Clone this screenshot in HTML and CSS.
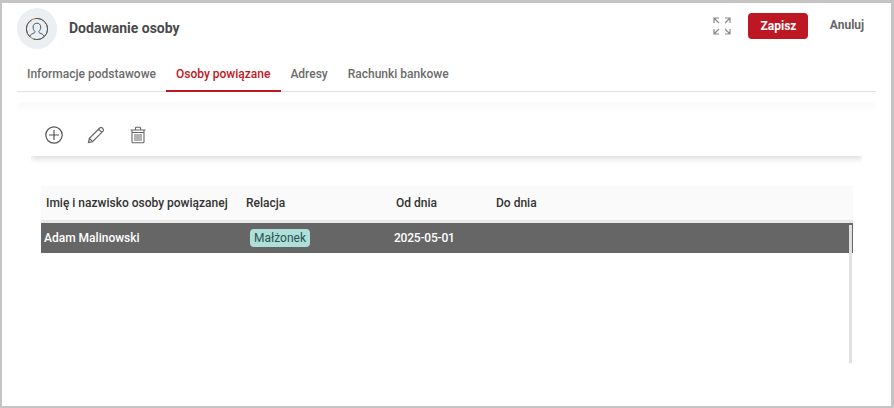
FILE: index.html
```html
<!DOCTYPE html>
<html lang="pl">
<head>
<meta charset="utf-8">
<title>Dodawanie osoby</title>
<link rel="stylesheet" href="styles.css">
</head>
<body>
<div class="window">
  <header class="head">
    <div class="avatar">
      <svg width="24" height="24" viewBox="0 0 24 24" fill="none" stroke-width="1">
        <circle cx="12" cy="12" r="10.6" stroke="#b8752f"/>
        <circle cx="12" cy="12" r="10.6" stroke="#3c5a78" stroke-dasharray="20 4"/>
        <path d="M4.8 19.6c.6-2.4 2.6-3 4.4-3.6.7-.3.9-.9.8-1.5-1.2-1-1.9-2.600-1.900-4.500 0-2.300 1.500-3.800 3.800-3.800s3.800 1.500 3.800 3.800c0 1.900-.7 3.500-1.900 4.500-.1.600.1 1.200.8 1.500 1.800.6 3.800 1.200 4.400 3.600" stroke="#41566c"/>
      </svg>
    </div>
    <h1 class="title">Dodawanie osoby</h1>
    <div class="actions">
      <svg class="expand" width="18" height="18" viewBox="0 0 18 18" fill="none" stroke="#8a8a8a" stroke-width="1.200">
        <path d="M1 6V1h5M1 1l5 5M12 1h5v5M17 1l-5 5M1 12v5h5M1 17l5-5M17 12v5h-5M17 17l-5-5"/>
      </svg>
      <button class="btn-save">Zapisz</button>
      <button class="btn-cancel">Anuluj</button>
    </div>
  </header>
  <nav class="tabs">
    <a class="tab">Informacje podstawowe</a>
    <a class="tab active">Osoby powiązane</a>
    <a class="tab">Adresy</a>
    <a class="tab">Rachunki bankowe</a>
  </nav>
  <section class="panel">
    <div class="toolbar">
      <svg width="18" height="18" viewBox="0 0 18 18" fill="none" stroke="#555" stroke-width="1.200">
        <circle cx="9" cy="9" r="8.200"/>
        <path d="M9 4v10M4 9h10"/>
      </svg>
      <svg width="18" height="18" viewBox="0 0 18 18" fill="none" stroke="#666" stroke-width="1.200">
        <path d="M1.500 16.500l.9-4.100L12.800 2c.7-.7 1.700-.7 2.400 0l.8.8c.7.7.7 1.700 0 2.400L5.600 15.600zM2.400 12.400l3.200 3.200M11.600 3.200l3.200 3.200"/>
      </svg>
      <svg width="18" height="18" viewBox="0 0 18 18" fill="none" stroke="#666" stroke-width="1.100">
        <path d="M1.500 4h15M6.500 3.800V2c0-.5.300-.8.800-.8h3.400c.5 0 .8.300.8.800v1.800M3 4.500v11.300c0 .6.400 1 1 1h10c.6 0 1-.4 1-1V4.500M3 6.500h12"/>
        <path d="M6 8v7M8 8v7M10 8v7M12 8v7" stroke-width="1"/>
      </svg>
    </div>
    <div class="table">
      <div class="row thead">
        <div class="c1">Imię i nazwisko osoby powiązanej</div>
        <div class="c2">Relacja</div>
        <div class="c3">Od dnia</div>
        <div class="c4">Do dnia</div>
      </div>
      <div class="body">
        <div class="row selected">
          <div class="c1">Adam Malinowski</div>
          <div class="c2"><span class="badge">Małżonek</span></div>
          <div class="c3">2025-05-01</div>
          <div class="c4"></div>
        </div>
        <div class="scroll"></div>
      </div>
    </div>
  </section>
</div>
</body>
</html>
```
FILE: styles.css
```css
* { box-sizing: border-box; }
html, body { margin: 0; height: 100%; }
body { font-family: Roboto, "Liberation Sans", sans-serif; background: #fff; overflow: hidden; }
.window {
  height: 408px;
  border: solid #c4c4c4;
  border-width: 3px 3px 2px 2px;
  padding: 5px 5px 0 15px;
  background: #fff;
}
.head { display: flex; align-items: center; height: 41px; }
.avatar {
  width: 40px; height: 41px; border-radius: 50%;
  background: #ebeff2;
  display: flex; align-items: center; justify-content: center;
}
.title { margin: 0 0 2px 12px; font-size: 14px; font-weight: 700; color: #4a4a4a; }
.actions { margin-left: auto; margin-bottom: 5px; display: flex; align-items: center; }
.expand { margin-right: 17px; }
.btn-save {
  width: 60px; height: 26px; border: 0; border-radius: 4px;
  background: #bd1723; color: #fff;
  font: 700 12px Roboto, sans-serif; padding: 0 0 0 1px;
}
.btn-cancel {
  width: 78px; height: 26px; border: 0; background: none; color: #666;
  font: 700 12px Roboto, sans-serif; padding: 0 0 2px 0;
}
.tabs {
  display: flex; height: 35px; margin-top: 8px;
  width: 859px;
  border-bottom: 1px solid #e2e2e2;
}
.tab {
  padding: 10px 10px 0; font-size: 12px; font-weight: 500; color: #6b6b6b;
  height: 35px; white-space: nowrap;
}
.tab.active { color: #bd1723; border-bottom: 2px solid #bd1723; padding-right: 11px; margin-right: -1px; }
.panel {
  width: 859px; margin-top: 10px; padding: 0 14px;
  background: linear-gradient(#f9f9f9 0, #fff 12px);
  border-radius: 6px 6px 0 0;
}
.toolbar {
  height: 54px; display: flex; align-items: center; gap: 24px; padding: 12px 0 0 14px;
  box-shadow: 0 3px 6px 0 rgba(0,0,0,.13);
  clip-path: inset(0 0 -12px 0);
  width: 831px;
}
.table { margin: 30px 0 0 10px; width: 812px; }
.row { display: flex; align-items: center; font-size: 12px; }
.thead { height: 34px; background: #fafafa; color: #333; font-weight: 500; }
.thead .c1 { padding-left: 5px; width: 205px; }
.thead .c2, .selected .c2 { width: 150px; }
.thead .c3 { width: 100px; }
.body { position: relative; height: 143px; border-top: 3px solid #e8e8e8; }
.selected { height: 30px; background: #666; color: #fff; font-weight: 500; }
.selected .c1 { padding-left: 3px; width: 205px; }
.selected .c2 { padding-left: 4px; }
.selected .c3 { margin-left: -2px; letter-spacing: -.2px; }
.badge {
  display: inline-block; height: 18px; line-height: 18px; padding: 0 4px;
  background: #aedfd9; color: #2a524e; border-radius: 4px; font-weight: 400; font-size: 12px;
}
.scroll { position: absolute; right: 1px; top: 2px; width: 3px; height: 138px; background: #e0e0e0; }
```
